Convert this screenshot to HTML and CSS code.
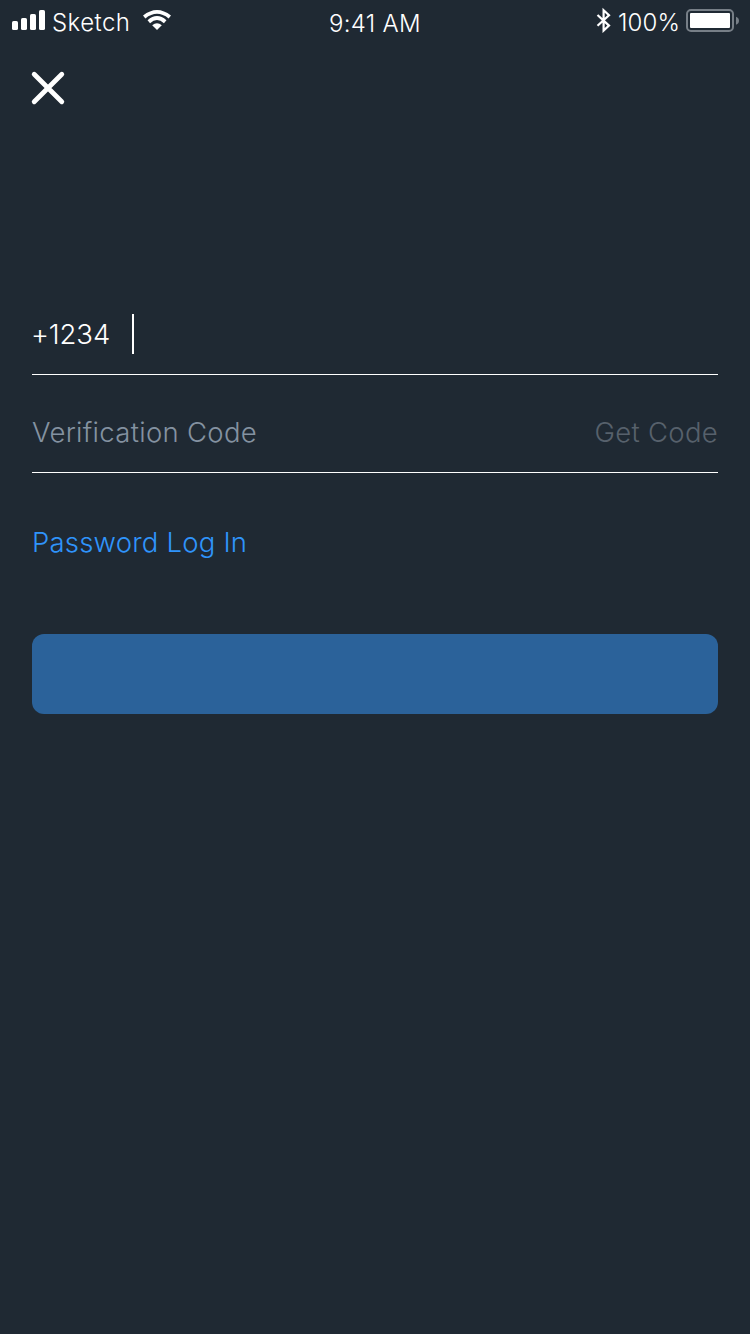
FILE: index.html
```html
<!DOCTYPE html>
<html lang="en">
<head>
<meta charset="utf-8">
<title>Log In</title>
<link rel="stylesheet" href="styles.css">
</head>
<body>
<main class="screen">
  <header class="status">
    <div class="status-left">
      <svg class="signal" width="34" height="20" viewBox="0 0 34 20" fill="#fff"><rect x="0" y="11" width="6" height="9" rx="1.6"/><rect x="9" y="8" width="6" height="12" rx="1.6"/><rect x="18" y="4" width="6" height="16" rx="1.6"/><rect x="27" y="0" width="6" height="20" rx="1.6"/></svg>
      <span class="carrier">Sketch</span>
      <svg class="wifi" width="30" height="22" viewBox="0 0 30 22" fill="none" stroke="#fff" stroke-width="3.8"><path d="M2.2 7.9Q15-2.2 27.8 7.9"/><path d="M6.8 12.7Q15 5.5 23.2 12.7"/><path d="M10.2 16.3Q15 12.4 19.8 16.3L15 21Z" fill="#fff" stroke="none"/></svg>
    </div>
    <span class="time">9:41 AM</span>
    <div class="status-right">
      <svg class="bluetooth" width="16" height="26" viewBox="0 0 16 26" fill="none" stroke="#fff" stroke-width="2.2"><path d="M1.5 8L13 18.6L7.6 23.6V3.2L13 8.2L1.5 18.8"/></svg>
      <span class="percent">100%</span>
      <svg class="battery" width="54" height="24" viewBox="0 0 54 24"><rect x="1" y="1" width="46" height="21" rx="4" fill="none" stroke="#777f87" stroke-width="2"/><rect x="4" y="4" width="40" height="15" rx="1" fill="#fff"/><path d="M50 7.8Q53 9 53 11.7Q53 14.5 50 15.7Z" fill="#777f87"/></svg>
    </div>
  </header>
  <button class="close" aria-label="Close"><svg width="36" height="36" viewBox="0 0 36 36" fill="none" stroke="#fff" stroke-width="4.8" stroke-linecap="round"><path d="M4.2 4.2L31.8 31.8M31.8 4.2L4.2 31.8"/></svg></button>
  <form class="form">
    <div class="field phone"><span class="prefix">+1234</span><span class="caret"></span></div>
    <div class="field code"><span class="placeholder">Verification Code</span><span class="get-code">Get Code</span></div>
    <a class="mode">Password Log In</a>
    <button class="submit" type="button" aria-label="Log In"></button>
  </form>
</main>
</body>
</html>
```
FILE: styles.css
```css
* { box-sizing: border-box; }
body { margin: 0; background: #1f2933; }
svg { display: block; flex: none; }
button { border: 0; padding: 0; background: none; }
.screen { width: 750px; height: 1334px; background: #1f2933; font-family: Inter, "Liberation Sans", sans-serif; font-weight: 350; color: #fff; overflow: hidden; }
.status { height: 40px; display: grid; grid-template-columns: 1fr auto 1fr; font-size: 24px; line-height: 30px; white-space: nowrap; }
.status-left { display: flex; padding-left: 12px; }
.signal { margin-top: 10px; }
.carrier { margin: 8px 0 0 6px; width: 78px; letter-spacing: .45px; }
.wifi { margin: 9px 0 0 12px; }
.time { margin-top: 9px; letter-spacing: .3px; }
.status-right { display: flex; justify-content: flex-end; padding-right: 10px; }
.bluetooth { margin-top: 7px; }
.percent { margin: 8px 6px 0 6px; width: 62px; letter-spacing: .1px; }
.battery { margin-top: 9px; }
.close { display: block; margin: 30px 0 0 30px; }
.form { margin: 188px 32px 0; font-size: 27.5px; line-height: 40px; }
.field { display: flex; border-bottom: 1px solid #fff; white-space: nowrap; }
.phone { height: 81px; padding-top: 20px; }
.prefix { width: 101px; margin-left: -1px; letter-spacing: -.1px; }
.caret { width: 2px; height: 40px; background: #fff; }
.code { height: 98px; padding-top: 37px; justify-content: space-between; }
.placeholder { color: #8492a1; letter-spacing: .3px; }
.get-code { color: #57616c; letter-spacing: .3px; }
.mode { display: block; margin-top: 49px; color: #2f94fb; letter-spacing: .2px; }
.submit { display: block; width: 100%; height: 80px; margin-top: 72px; border-radius: 12px; background: #2b629a; }
```
